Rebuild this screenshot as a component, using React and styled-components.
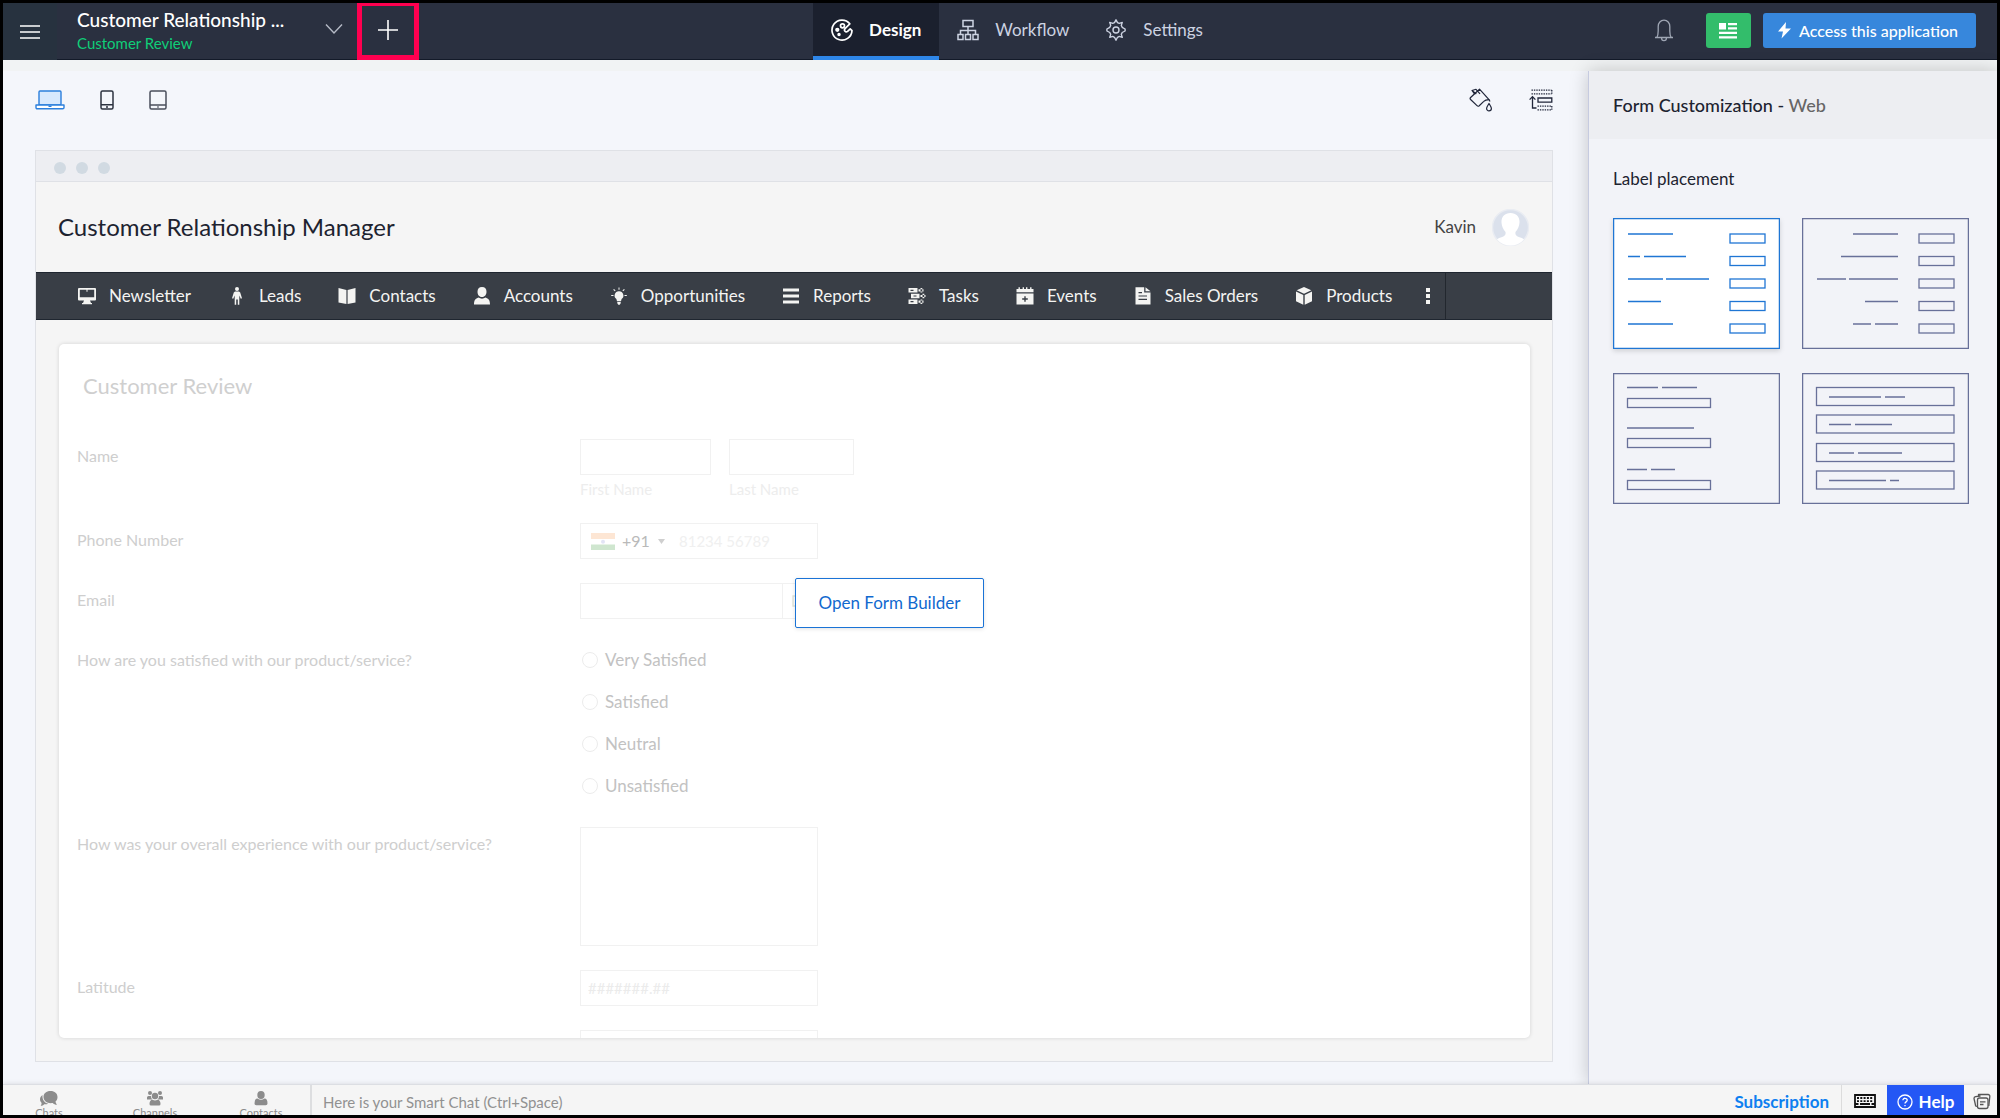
import React, { Fragment } from "react";
import styled, { createGlobalStyle, css } from "styled-components";

const GlobalStyle = createGlobalStyle`
  * {
    box-sizing: border-box;
  }
  body {
    margin: 0;
    font-family: Lato, "Liberation Sans", sans-serif;
    font-size: 17px;
    line-height: 24px;
    color: #1d2330;
  }
  button,
  input,
  select,
  textarea {
    font: inherit;
    color: inherit;
    margin: 0;
  }
  a {
    color: inherit;
    text-decoration: none;
  }
  svg {
    display: block;
    flex: none;
  }
`;

const Screen = styled.div`
  display: flex;
  flex-direction: column;
  height: 100vh;
  border: 3px solid #000;
  background: #f4f6fb;
  overflow: hidden;
`;

const PlainButton = styled.button`
  display: flex;
  align-items: center;
  justify-content: center;
  padding: 0;
  border: 0;
  background: none;
  cursor: pointer;
`;

/* top bar */

const TopBar = styled.header`
  display: grid;
  grid-template-columns: 1fr auto 1fr;
  flex: none;
  height: 57px;
  background: #2a3040;
  border-bottom: 1px solid #131a29;
  color: #cdd3e2;
`;

const TopLeft = styled.div`
  display: flex;
  align-items: stretch;
`;

const MenuButton = styled(PlainButton)`
  width: 54px;
  padding-right: 1px;
  background: #27323f;
  color: #fff;
`;

const AppName = styled.div`
  width: 228px;
  margin-left: 20px;
  padding-top: 5px;
  color: #fff;
  font-size: 19px;
  font-weight: 500;
  line-height: 24px;
`;

const FormName = styled.div`
  color: #0fce78;
  font-size: 15px;
  font-weight: normal;
  line-height: 22px;
`;

const ChevronButton = styled(PlainButton)`
  width: 52px;
  padding: 0 0 5px 5px;
  color: #b5bac6;
`;

const AddButton = styled(PlainButton)`
  width: 62px;
  height: 57px;
  border: 5px solid #ff0050;
  border-top-width: 3px;
  padding-bottom: 1px;
  color: #fff;
`;

const Tabs = styled.nav`
  display: flex;
  padding-left: 34px;
`;

const Tab = styled.a`
  display: flex;
  align-items: center;
  gap: 16px;
  height: 57px;
  padding: 0 18px;
  font-size: 17px;
  border-bottom: 4px solid transparent;
  ${({ $active }) =>
    $active &&
    css`
      background: #1b202e;
      border-color: #2e86e8;
      color: #fff;
      font-weight: bold;
    `}
`;

const TopRight = styled.div`
  display: flex;
  justify-content: flex-end;
  align-items: center;
  gap: 12px;
  padding-right: 21px;
  padding-bottom: 2px;
`;

const BellButton = styled(PlainButton)`
  margin-right: 20px;
  color: #9fa6b4;
`;

const NewsButton = styled(PlainButton)`
  width: 45px;
  height: 35px;
  border-radius: 3px;
  background: #33bd6b;
  color: #fff;
`;

const AccessLink = styled.a`
  display: flex;
  align-items: center;
  gap: 8px;
  height: 35px;
  padding: 0 18px 0 15px;
  border-radius: 3px;
  background: #3787dc;
  color: #fff;
  font-size: 16px;
  font-weight: 500;
`;

/* workspace */

const SubStrip = styled.div`
  flex: none;
  height: 11px;
  background: #f1f3f4;
`;

const Workspace = styled.div`
  display: flex;
  flex: 1;
  min-height: 0;
`;

const Stage = styled.main`
  display: flex;
  flex-direction: column;
  flex: 1;
  min-width: 0;
  padding: 0 35px 22px 32px;
`;

const StageTools = styled.div`
  display: flex;
  align-items: center;
  justify-content: space-between;
  flex: none;
  height: 79px;
  padding-bottom: 21px;
`;

const ToolGroup = styled.div`
  display: flex;
  align-items: center;
  gap: ${({ $gap }) => $gap}px;
`;

const Preview = styled.section`
  display: flex;
  flex-direction: column;
  flex: 1;
  min-height: 0;
  border: 1px solid #dfe1e6;
  background: #f5f5f5;
`;

const WindowDots = styled.div`
  display: flex;
  align-items: center;
  gap: 10px;
  flex: none;
  height: 31px;
  padding: 4px 18px 0;
  background: #edeef2;
  border-bottom: 1px solid #dfe1e6;
`;

const Dot = styled.span`
  width: 12px;
  height: 12px;
  border-radius: 50%;
  background: #d1dae2;
`;

const AppHeader = styled.div`
  display: flex;
  align-items: center;
  justify-content: space-between;
  flex: none;
  height: 90px;
  padding: 0 23px 0 22px;
`;

const AppTitle = styled.h1`
  margin: 0;
  font-size: 24px;
  font-weight: normal;
  line-height: 32px;
`;

const User = styled.div`
  display: flex;
  align-items: center;
  gap: 16px;
  color: #444;
`;

const AppNav = styled.nav`
  display: flex;
  align-items: stretch;
  flex: none;
  height: 48px;
  padding-left: 23px;
  background: #393e46;
  border-top: 1px solid #1f2630;
  border-bottom: 1px solid #1f2630;
  color: #f4f4f2;
`;

const NavLink = styled.a`
  display: flex;
  align-items: center;
  gap: 12px;
  padding: 0 18px;
  white-space: nowrap;
`;

const MoreButton = styled(PlainButton)`
  width: 36px;
  border-right: 1px solid #22272e;
`;

const Card = styled.div`
  position: relative;
  flex: 1;
  min-height: 0;
  margin: 24px 22px 23px 23px;
  padding: 26px 18px 0;
  border-radius: 5px;
  background: #fff;
  box-shadow: 0 0 4px rgba(0, 0, 0, 0.14);
`;

const FormClip = styled.form`
  height: 100%;
  overflow: hidden;
`;

const FormTitle = styled.h2`
  margin: 0 0 38px 6px;
  color: #cfcfcf;
  font-size: 22px;
  font-weight: normal;
  line-height: 31px;
`;

const FormRows = styled.div`
  display: flex;
  flex-direction: column;
  gap: 24px;
`;

const Row = styled.div`
  display: grid;
  grid-template-columns: 503px 1fr;
  align-items: start;
`;

const rowLabel = css`
  color: #cecece;
  font-size: 16px;
  line-height: 34px;
`;

const RowLabel = styled.label`
  ${rowLabel}
`;

const RowCaption = styled.div`
  ${rowLabel}
`;

const Fields = styled.div`
  display: flex;
  gap: 18px;
`;

const TextInput = styled.input`
  display: block;
  width: ${({ $width }) => $width}px;
  height: 36px;
  padding: 0 7px;
  border: 1px solid #f1f1f1;
  background: #fff;
  font-size: 15px;
  &::placeholder {
    color: #ebebeb;
    opacity: 1;
  }
`;

const SubLabel = styled.label`
  display: block;
  padding-top: 4px;
  color: #ededed;
  font-size: 15px;
  line-height: 20px;
`;

const PhoneBox = styled.div`
  display: flex;
  align-items: center;
  width: 238px;
  height: 36px;
  padding-left: 10px;
  border: 1px solid #f1f1f1;
`;

const CodeSelect = styled.select`
  appearance: none;
  width: 36px;
  margin-left: 7px;
  padding: 0;
  border: 0;
  background: none;
  color: #b9b9b9;
  font-size: 16px;
`;

const PhoneInput = styled.input`
  width: 110px;
  margin-left: 14px;
  padding: 0;
  border: 0;
  background: none;
  font-size: 15px;
  &::placeholder {
    color: #f0f0f0;
    opacity: 1;
  }
`;

const EmailBox = styled.div`
  display: flex;
  width: 238px;
`;

const EmailAddon = styled.span`
  display: flex;
  align-items: center;
  flex: 1;
  height: 36px;
  padding-left: 9px;
  border: 1px solid #f1f1f1;
  border-left: 0;
  color: #e2e4da;
`;

const Options = styled.div`
  display: flex;
  flex-direction: column;
  gap: 8px;
`;

const Option = styled.label`
  display: flex;
  align-items: center;
  gap: 7px;
  padding-left: 2px;
  color: #c2c2c2;
  line-height: 34px;
`;

const Radio = styled.input`
  appearance: none;
  width: 16px;
  height: 16px;
  border: 1px solid #ececec;
  border-radius: 50%;
`;

const TextArea = styled.textarea`
  display: block;
  width: 238px;
  height: 119px;
  border: 1px solid #f1f1f1;
  resize: none;
`;

const BuilderButton = styled.button`
  position: absolute;
  top: 234px;
  left: 50%;
  height: 50px;
  padding: 0 23px;
  border: 1px solid #1a73d6;
  border-radius: 2px;
  background: #fff;
  box-shadow: 0 1px 4px rgba(0, 0, 0, 0.12);
  color: #1169cf;
  cursor: pointer;
`;

/* customization panel */

const Panel = styled.aside`
  flex: none;
  width: 409px;
  border-left: 1px solid #c6cbe0;
  background: #f2f3f8;
  box-shadow: 0 0 18px rgba(0, 0, 0, 0.2);
`;

const PanelHeader = styled.h2`
  margin: 0;
  padding: 1px 24px 0;
  background: #edeef2;
  font-size: 18px;
  font-weight: 500;
  line-height: 67px;
`;

const Muted = styled.span`
  color: #666;
`;

const PanelBody = styled.div`
  padding: 28px 28px 24px 24px;
`;

const PanelLabel = styled.h3`
  margin: 0 0 27px;
  font-size: 17px;
  font-weight: normal;
  line-height: 24px;
`;

const TileGrid = styled.div`
  display: grid;
  grid-template-columns: 1fr 1fr;
  gap: 24px 22px;
`;

const Tile = styled.button`
  padding: 0;
  border: 0;
  background: ${({ $active }) => ($active ? "#fff" : "none")};
  box-shadow: ${({ $active }) =>
    $active ? "0 2px 5px rgba(0, 0, 0, 0.15)" : "none"};
  color: ${({ $active }) => ($active ? "#1f76d4" : "#687099")};
  cursor: pointer;
  svg {
    width: 100%;
    height: auto;
  }
`;

/* bottom bar */

const BottomBar = styled.footer`
  position: relative;
  display: flex;
  flex: none;
  height: 31px;
  background: #f5f5f5;
  border-top: 1px solid #dcdee3;
  box-shadow: 0 0 5px rgba(0, 0, 0, 0.12);
`;

const ChatTabs = styled.div`
  display: flex;
  gap: 14px;
  width: 309px;
  height: 30px;
  overflow: hidden;
  border-right: 2px solid #dddee0;
`;

const ChatTab = styled.button`
  display: flex;
  flex-direction: column;
  align-items: center;
  width: 92px;
  height: 40px;
  padding: 6px 0 0;
  border: 0;
  background: none;
  color: #8c8c8c;
  font-size: 11px;
  line-height: 13px;
  cursor: pointer;
`;

const SmartChat = styled.input`
  flex: 1;
  min-width: 0;
  padding: 3px 11px 0;
  border: 0;
  background: none;
  font-size: 15px;
  &::placeholder {
    color: #919191;
    opacity: 1;
  }
`;

const SubscriptionLink = styled.a`
  padding: 0 12px;
  border-right: 1px solid #dcdcdc;
  color: #0d7ff0;
  font-size: 17px;
  font-weight: bold;
  line-height: 34px;
`;

const KeyboardButton = styled(PlainButton)`
  width: 45px;
  padding-top: 2px;
  color: #111;
`;

const HelpButton = styled(PlainButton)`
  gap: 6px;
  width: 77px;
  padding-top: 3px;
  background: #2457f5;
  color: #fff;
  font-weight: bold;
`;

const NotesButton = styled(PlainButton)`
  width: 33px;
  padding: 2px 0 0 3px;
  color: #555;
`;

/* line icons share one wrapper */

const Icon = ({ w = 20, h = w, box, children, ...rest }) => (
  <svg
    width={w}
    height={h}
    viewBox={box || `0 0 ${w} ${h}`}
    fill="none"
    stroke="currentColor"
    strokeWidth="1.4"
    aria-hidden="true"
    {...rest}
  >
    {children}
  </svg>
);

const SolidIcon = (props) => (
  <Icon fill="currentColor" stroke="none" strokeWidth="0" {...props} />
);

const PaletteIcon = () => (
  <Icon w={22} strokeWidth="1.7">
    <path d="M18.800 4.800A10 10 0 1 0 21 11.600l-1.800-1.800-2.600 2.600q-1.500 1-2.600-.2t0-2.600z" strokeLinejoin="round" />
    <circle cx="11.500" cy="6.800" r="2" />
    <circle cx="6.300" cy="10.800" r="1.300" fill="currentColor" />
    <circle cx="8" cy="15.500" r=".9" fill="currentColor" />
  </Icon>
);

const WorkflowIcon = () => (
  <Icon w={22} strokeWidth="1.5">
    <path d="M6 1.500h10v6H6zM1 15.500h5v5H1zM8.500 15.500h5v5h-5zM16 15.500h5v5h-5zM11 7.500v8M3.500 15.500v-4h15v4" />
  </Icon>
);

const GearIcon = () => (
  <Icon w={22} strokeWidth="1.400" strokeLinejoin="round">
    <circle cx="11" cy="11" r="3" />
    <path d="M9.500 3.600 11 .8l1.500 2.800 1.800.8 3-1-1 3 .9 1.900 2.900 1.700v2l-2.900 1.500-.9 1.900 1 3-3-1-1.800.9L11 21.200l-1.500-2.900-1.800-.9-3 1 1-3-.9-1.900L1.900 12v-2l2.900-1.700.9-1.900-1-3 3 1z" />
  </Icon>
);

const BellIcon = () => (
  <Icon w={20} h={24} strokeWidth="1.3">
    <path d="M1 18.500h18M2.800 18.500C4 16.500 4.200 14.500 4.200 12V7.500C4.200 3.800 6.600 1.200 10 1.200s5.800 2.600 5.800 6.300V12c0 2.500.2 4.500 1.400 6.500M7.500 18.800c0 3.800 5 3.800 5 0" />
  </Icon>
);

const NewsIcon = () => (
  <SolidIcon w={18} h={16}>
    <path d="M0 0h7v6.500H0zM9 0h9v2.200H9zM9 4.300h9v2.200H9zM0 8.800h18V11H0zM0 13.300h18v2.200H0z" />
  </SolidIcon>
);

const BoltIcon = () => (
  <SolidIcon w={13} h={17}>
    <path d="M8 0 0 9.500h5L3.500 16.500 13 6.500H7.500z" />
  </SolidIcon>
);

const LaptopIcon = () => (
  <Icon w={30} h={20} color="#2b7fdc" strokeLinejoin="round">
    <rect x="4" y="1" width="22" height="14" rx="1" fill="#d7e8fd" />
    <path d="M1 15h28v2.500q0 1.300-1.300 1.300H2.300Q1 18.800 1 17.500z" fill="#fff" />
    <path d="M13.500 16.300h3" />
  </Icon>
);

const PhoneIcon = () => (
  <Icon w={14} h={20} color="#2c3340" strokeWidth="1.500">
    <rect x="1" y="1" width="12" height="18" rx="1.500" />
    <path d="M1 14.700h12M6 17h2" />
  </Icon>
);

const TabletIcon = () => (
  <Icon w={18} h={20} color="#4a4f5c" strokeWidth="1.500">
    <rect x="1" y="1" width="16" height="18" rx="1.500" />
    <path d="M1 15h16M8.300 17h1.400" />
  </Icon>
);

const BucketIcon = () => (
  <Icon w={24} h={24} color="#20263a" strokeWidth="1.200" strokeLinejoin="round">
    <path d="M10.500 1.200 20 11.600c-3 .2-4 .6-5.200 1.800l-4.600 4.400q-1 1-2.200-.2L1.600 11.500q-1-1 0-2z" />
    <path d="M5.500 6 3 2.500 7 1.300l4 4.500M3.300 2.800l4 3.200M20 11.600l1 2" />
    <path d="M20 15.500c-1.600 2.600-2.400 3.800-2.400 5a2.400 2.400 0 0 0 4.800 0c0-1.200-.8-2.400-2.400-5z" />
  </Icon>
);

const ReorderIcon = () => (
  <Icon w={24} h={22} color="#20263a" strokeWidth="1.300">
    <path d="M2.500 1.200h20M2.500 4.800h20" strokeDasharray="1.400 1" />
    <path d="M8.500 17.200h14M8.500 20.800h14M22.800 1v4M22.800 17v4" strokeDasharray="1.400 1" />
    <path d="M9 9h13.800v4.200H9zM3.500 8v11h4M.6 10.600l2.900-3 2.900 3" />
  </Icon>
);

const Avatar = () => (
  <Icon w={37} stroke="none">
    <circle cx="18.500" cy="18.500" r="18" fill="#dbe1ec" stroke="#e9ecf2" />
    <path d="M18.500 4c-6 0-9.300 4-9 9.500.2 4 1.800 7 4 9.500.5 3-.5 4-4 5.200C7 29 5.800 29.600 5 30.500A18 18 0 0 0 32 30.500c-.8-.9-2-1.500-4.500-2.300-3.500-1.200-4.500-2.200-4-5.200 2.200-2.500 3.800-5.500 4-9.500C27.800 8 24.500 4 18.500 4z" fill="#fff" />
  </Icon>
);

const Flag = () => (
  <Icon w={24} h={17} stroke="none">
    <path d="M0 0h24v6H0z" fill="#fde6d4" />
    <path d="M0 11.500h24V17H0z" fill="#cfe6cf" />
    <circle cx="12" cy="8.700" r="2" fill="#e2e4f5" />
  </Icon>
);

const NAV_ITEMS = [
  {
    label: "Newsletter",
    icon: (
      <path d="M2 2h16q1 0 1 1v10.500q0 1-1 1h-5l1 2.500h1v1.200H5V17h1l1-2.500H2q-1 0-1-1V3q0-1 1-1zm.8 1.700v7.500h14.400V3.700zM9.500 3.700h1v2h-1z" fillRule="evenodd" />
    ),
  },
  {
    label: "Leads",
    icon: (
      <path d="M10 1a2 2 0 1 1 0 4 2 2 0 0 1 0-4zM8 5.600h4l1.200 1 1.800 5.700-1.200.4-1.500-3.200v9.300h-1.500V13.500h-1.600v5.300H7.700V9.500l-1.500 3.200-1.200-.4 1.800-5.700z" />
    ),
  },
  {
    label: "Contacts",
    icon: <path d="M1.500 2 9.400 4v14L1.500 16.500zM18.500 2l-7.900 2v14l7.900-1.500z" />,
  },
  {
    label: "Accounts",
    icon: (
      <path d="M10 1c3 0 4.500 2 4.500 4.700S13 11 10 11 5.500 8.500 5.500 5.700 7 1 10 1zM2 18.500c0-4.500 1.500-6 4.500-7 2 1.500 5 1.500 7 0 3 1 4.500 2.500 4.500 7z" />
    ),
  },
  {
    label: "Opportunities",
    icon: (
      <path d="M10 5.200a4.300 4.300 0 0 1 2.600 7.800l-.6 2.200H8L7.400 13A4.300 4.300 0 0 1 10 5.200zM8.300 16h3.400v1.200l-1 1.500H9.300l-1-1.500zM9.500 1.500h1V3.800h-1zM2.200 9h2.300v1.100H2.200zM15.500 9h2.300v1.100h-2.300zM4.200 3.700l.8-.8 1.600 1.600-.8.8zM15.800 3.700l-.8-.8-1.600 1.600.8.8z" />
    ),
  },
  {
    label: "Reports",
    icon: <path d="M2 2.500h16v3H2zM2 8.500h16v3H2zM2 14.500h16v3H2z" />,
  },
  {
    label: "Tasks",
    icon: (
      <path d="M1.500 2h9v4.600h-9zM3.500 3.700v1.200h3V3.700zM11.500 3.200h5v2.200h-5zM13.500 2h1.800v4.600h-1.800zM4 7.700h8.500v4.600H4zM6.500 9.400v1.200h3V9.400zM13.500 8.900h5v2.200h-5zM15.500 7.700h1.800v4.600h-1.800zM1.500 13.400h9V18h-9zM3.500 15.100v1.200h3v-1.200zM11.500 14.600h5v2.200h-5zM13.500 13.400h1.800V18h-1.800z" fillRule="evenodd" />
    ),
  },
  {
    label: "Events",
    icon: (
      <path d="M1.500 3h2V1.200h1.400V3h2.700V1.200H9V3h2V1.200h1.400V3h2.700V1.200h1.400V3h2v3.300h-17zM1.500 7.400h17V18.500h-17zm7.800 2.800v2.100H7.200v1.400h2.100v2.100h1.400v-2.100h2.100v-1.400h-2.100v-2.100z" fillRule="evenodd" />
    ),
  },
  {
    label: "Sales Orders",
    icon: (
      <path d="M2.500 1.300h8.700v5.200h6.300v12h-15zM12.500 1.300l5 4h-5zM5.500 6v1.200h3.500V6zm0 3.400v1.200h8.500V9.400zm0 3.400V14h8.500v-1.200z" fillRule="evenodd" />
    ),
  },
  {
    label: "Products",
    icon: (
      <path d="m10 1 7.300 3.200L10 7.800 2.700 4.200zM2 5.500 9.300 9v9.800L2 15.200zM18 5.500 10.700 9v9.800l7.300-3.600z" />
    ),
  },
];

const SATISFACTION = ["Very Satisfied", "Satisfied", "Neutral", "Unsatisfied"];

const TILES = [
  {
    name: "Left aligned labels",
    lines:
      "M15 16h45M15 38.500h12M31 38.500h42M15 61h35M53 61h43M15 83.500h33M15 106h45",
    boxes: [16, 38.5, 61, 83.5, 106].map((y) => [117, y, 35, 9]),
  },
  {
    name: "Right aligned labels",
    lines:
      "M51 16h45M39 38.500h57M15 61h29M47 61h49M63 83.500h33M51 106h18M73 106h23",
    boxes: [16, 38.5, 61, 83.5, 106].map((y) => [117, y, 35, 9]),
  },
  {
    name: "Labels on top",
    lines: "M14 14.500h31M49 14.500h35M14 55h67M14 96.500h20M38 96.500h24",
    boxes: [25.5, 65.5, 107.5].map((y) => [14.5, y, 83, 9]),
  },
  {
    name: "Labels inside fields",
    lines:
      "M27 24h52M83 24h20M27 51.500h22M53 51.500h37M27 80h25M56 80h44M27 107.500h57M88 107.500h9",
    boxes: [14.5, 42, 70.5, 98].map((y) => [14.5, y, 137.5, 18]),
  },
];

const PlacementTile = ({ name, lines, boxes, active }) => (
  <Tile type="button" $active={active} aria-pressed={active} aria-label={name}>
    <Icon w={167} h={131} strokeWidth="1.300">
      <rect x=".6" y=".6" width="165.800" height="129.800" />
      <path d={lines} />
      {boxes.map(([x, y, width, height]) => (
        <rect key={y} x={x} y={y} width={width} height={height} />
      ))}
    </Icon>
  </Tile>
);

const Header = () => (
  <TopBar>
    <TopLeft>
      <MenuButton type="button" aria-label="Menu">
        <Icon w={20} h={16} strokeWidth="1.500">
          <path d="M0 2h20M0 8h20M0 14h20" />
        </Icon>
      </MenuButton>
      <AppName>
        Customer Relationship ...
        <FormName>Customer Review</FormName>
      </AppName>
      <ChevronButton type="button" aria-label="Switch form">
        <Icon w={18} h={12}>
          <path d="m1 1.500 8 8.500 8-8.500" />
        </Icon>
      </ChevronButton>
      <AddButton type="button" aria-label="Add">
        <Icon w={20} strokeWidth="1.600">
          <path d="M10 0v20M0 10h20" />
        </Icon>
      </AddButton>
    </TopLeft>
    <Tabs>
      <Tab href="#design" $active>
        <PaletteIcon />
        Design
      </Tab>
      <Tab href="#workflow">
        <WorkflowIcon />
        Workflow
      </Tab>
      <Tab href="#settings">
        <GearIcon />
        Settings
      </Tab>
    </Tabs>
    <TopRight>
      <BellButton type="button" aria-label="Notifications">
        <BellIcon />
      </BellButton>
      <NewsButton type="button" aria-label="News">
        <NewsIcon />
      </NewsButton>
      <AccessLink href="#access">
        <BoltIcon />
        Access this application
      </AccessLink>
    </TopRight>
  </TopBar>
);

const ReviewForm = () => (
  <Card>
    <FormClip>
      <FormTitle>Customer Review</FormTitle>
      <FormRows>
        <Row>
          <RowCaption>Name</RowCaption>
          <Fields>
            <div>
              <TextInput id="first-name" $width={131} />
              <SubLabel htmlFor="first-name">First Name</SubLabel>
            </div>
            <div>
              <TextInput id="last-name" $width={125} />
              <SubLabel htmlFor="last-name">Last Name</SubLabel>
            </div>
          </Fields>
        </Row>
        <Row>
          <RowLabel htmlFor="phone">Phone Number</RowLabel>
          <PhoneBox>
            <Flag />
            <CodeSelect aria-label="Country code" defaultValue="+91">
              <option>+91</option>
            </CodeSelect>
            <SolidIcon w={7} h={5} color="#cfcfcf">
              <path d="M0 0h7L3.500 5z" />
            </SolidIcon>
            <PhoneInput id="phone" placeholder="81234 56789" />
          </PhoneBox>
        </Row>
        <Row>
          <RowLabel htmlFor="email">Email</RowLabel>
          <EmailBox>
            <TextInput id="email" type="email" $width={203} />
            <EmailAddon>
              <Icon w={16} h={12}>
                <path d="M1 1h14v10H1z" />
              </Icon>
            </EmailAddon>
          </EmailBox>
        </Row>
        <Row>
          <RowCaption>How are you satisfied with our product/service?</RowCaption>
          <Options>
            {SATISFACTION.map((option) => (
              <Option key={option}>
                <Radio type="radio" name="satisfaction" />
                {option}
              </Option>
            ))}
          </Options>
        </Row>
        <Row>
          <RowLabel htmlFor="experience">
            How was your overall experience with our product/service?
          </RowLabel>
          <TextArea id="experience" />
        </Row>
        <Row>
          <RowLabel htmlFor="latitude">Latitude</RowLabel>
          <TextInput id="latitude" placeholder="#######.##" $width={238} />
        </Row>
        <Row>
          <span />
          <TextInput aria-label="Longitude" $width={238} />
        </Row>
      </FormRows>
    </FormClip>
    <BuilderButton type="button">Open Form Builder</BuilderButton>
  </Card>
);

const Footer = () => (
  <BottomBar>
    <ChatTabs>
      <ChatTab type="button">
        <SolidIcon w={18} h={15}>
          <path d="M10.500 0c4.200 0 7 2.500 7 6 0 2-.8 3.500-2 4.600.2 1.400.8 2.400 1.500 3.200-1.800 0-3.300-.6-4.300-1.800-5.200.8-9.200-2-9.200-6 0-3.500 2.800-6 7-6z" />
          <path d="M2.500 4C.8 5.200 0 6.500 0 8.300c0 1.500.6 2.700 1.600 3.600 0 1.200-.4 2-1 2.800 1.500 0 2.700-.5 3.600-1.500 1.500.2 2.800 0 4-.5C4.500 12 2 8.500 2.500 4z" />
        </SolidIcon>
        Chats
      </ChatTab>
      <ChatTab type="button">
        <SolidIcon w={16} h={15}>
          <circle cx="3" cy="2" r="2" />
          <circle cx="13" cy="2" r="2" />
          <circle cx="8" cy="5" r="3.200" />
          <path d="M0 8.500V6.500Q0 5 1.500 5H4q0 2.500 1.300 3.500zM16 8.500V6.500Q16 5 14.500 5H12q0 2.500-1.300 3.500zM2.500 13q0-4 3-4.200 2.500 1.400 5 0 3 .2 3 4.200 0 1.500-1.500 1.500H4q-1.500 0-1.500-1.500z" />
        </SolidIcon>
        Channels
      </ChatTab>
      <ChatTab type="button">
        <SolidIcon w={14} h={15}>
          <ellipse cx="7" cy="4" rx="3.700" ry="4" />
          <path d="M.5 12.500q0-5 3-5 3.500 2.400 7 0 3 0 3 5 0 1.800-1.800 1.800H2.300Q.5 14.300.5 12.500z" />
        </SolidIcon>
        Contacts
      </ChatTab>
    </ChatTabs>
    <SmartChat
      aria-label="Smart Chat"
      placeholder="Here is your Smart Chat (Ctrl+Space)"
    />
    <SubscriptionLink href="#subscription">Subscription</SubscriptionLink>
    <KeyboardButton type="button" aria-label="Keyboard shortcuts">
      <Icon w={22} h={14} strokeWidth="1.800">
        <path d="M1 1h20v12H1z" />
        <path d="M3 4h16M3 7.200h16" strokeDasharray="2 1.300" />
        <path d="M1 10h3.500M6 10h10M17.500 10H21" />
      </Icon>
    </KeyboardButton>
    <HelpButton type="button">
      <Icon w={16} strokeWidth="1.300">
        <circle cx="8" cy="8" r="7" />
        <path d="M5.900 6.300c0-2.800 4.300-2.600 4.300 0 0 1.600-2.200 1.600-2.200 3.200M8 11v1.300" />
      </Icon>
      Help
    </HelpButton>
    <NotesButton type="button" aria-label="Notes">
      <Icon w={18} h={17} strokeWidth="1.300" strokeLinejoin="round">
        <rect x="4.500" y="5" width="10.500" height="10.500" rx="2" />
        <path d="M7 8.800h5.500M7 11.500h3.500M4 13.500l-1.300-.5L1 5.500q0-1.500 1.500-1.800l5-.7M5.500 3V1.500h9.500q2 .2 1.800 2l-1 9.500" />
      </Icon>
    </NotesButton>
  </BottomBar>
);

export default () => (
  <Fragment>
    <GlobalStyle />
    <Screen>
      <Header />
      <SubStrip />
      <Workspace>
        <Stage>
          <StageTools>
            <ToolGroup $gap={35}>
              <PlainButton type="button" aria-label="Web">
                <LaptopIcon />
              </PlainButton>
              <PlainButton type="button" aria-label="Phone">
                <PhoneIcon />
              </PlainButton>
              <PlainButton type="button" aria-label="Tablet">
                <TabletIcon />
              </PlainButton>
            </ToolGroup>
            <ToolGroup $gap={36}>
              <PlainButton type="button" aria-label="Themes">
                <BucketIcon />
              </PlainButton>
              <PlainButton type="button" aria-label="Reorder">
                <ReorderIcon />
              </PlainButton>
            </ToolGroup>
          </StageTools>
          <Preview>
            <WindowDots>
              <Dot />
              <Dot />
              <Dot />
            </WindowDots>
            <AppHeader>
              <AppTitle>Customer Relationship Manager</AppTitle>
              <User>
                Kavin
                <Avatar />
              </User>
            </AppHeader>
            <AppNav>
              {NAV_ITEMS.map(({ label, icon }) => (
                <NavLink key={label} href="#nav">
                  <SolidIcon w={20}>{icon}</SolidIcon>
                  {label}
                </NavLink>
              ))}
              <MoreButton type="button" aria-label="More">
                <SolidIcon w={4} h={16}>
                  <path d="M0 0h4v4H0zM0 6h4v4H0zM0 12h4v4H0z" />
                </SolidIcon>
              </MoreButton>
            </AppNav>
            <ReviewForm />
          </Preview>
        </Stage>
        <Panel>
          <PanelHeader>
            Form Customization - <Muted>Web</Muted>
          </PanelHeader>
          <PanelBody>
            <PanelLabel>Label placement</PanelLabel>
            <TileGrid>
              {TILES.map((tile, index) => (
                <PlacementTile key={tile.name} {...tile} active={index === 0} />
              ))}
            </TileGrid>
          </PanelBody>
        </Panel>
      </Workspace>
      <Footer />
    </Screen>
  </Fragment>
);
